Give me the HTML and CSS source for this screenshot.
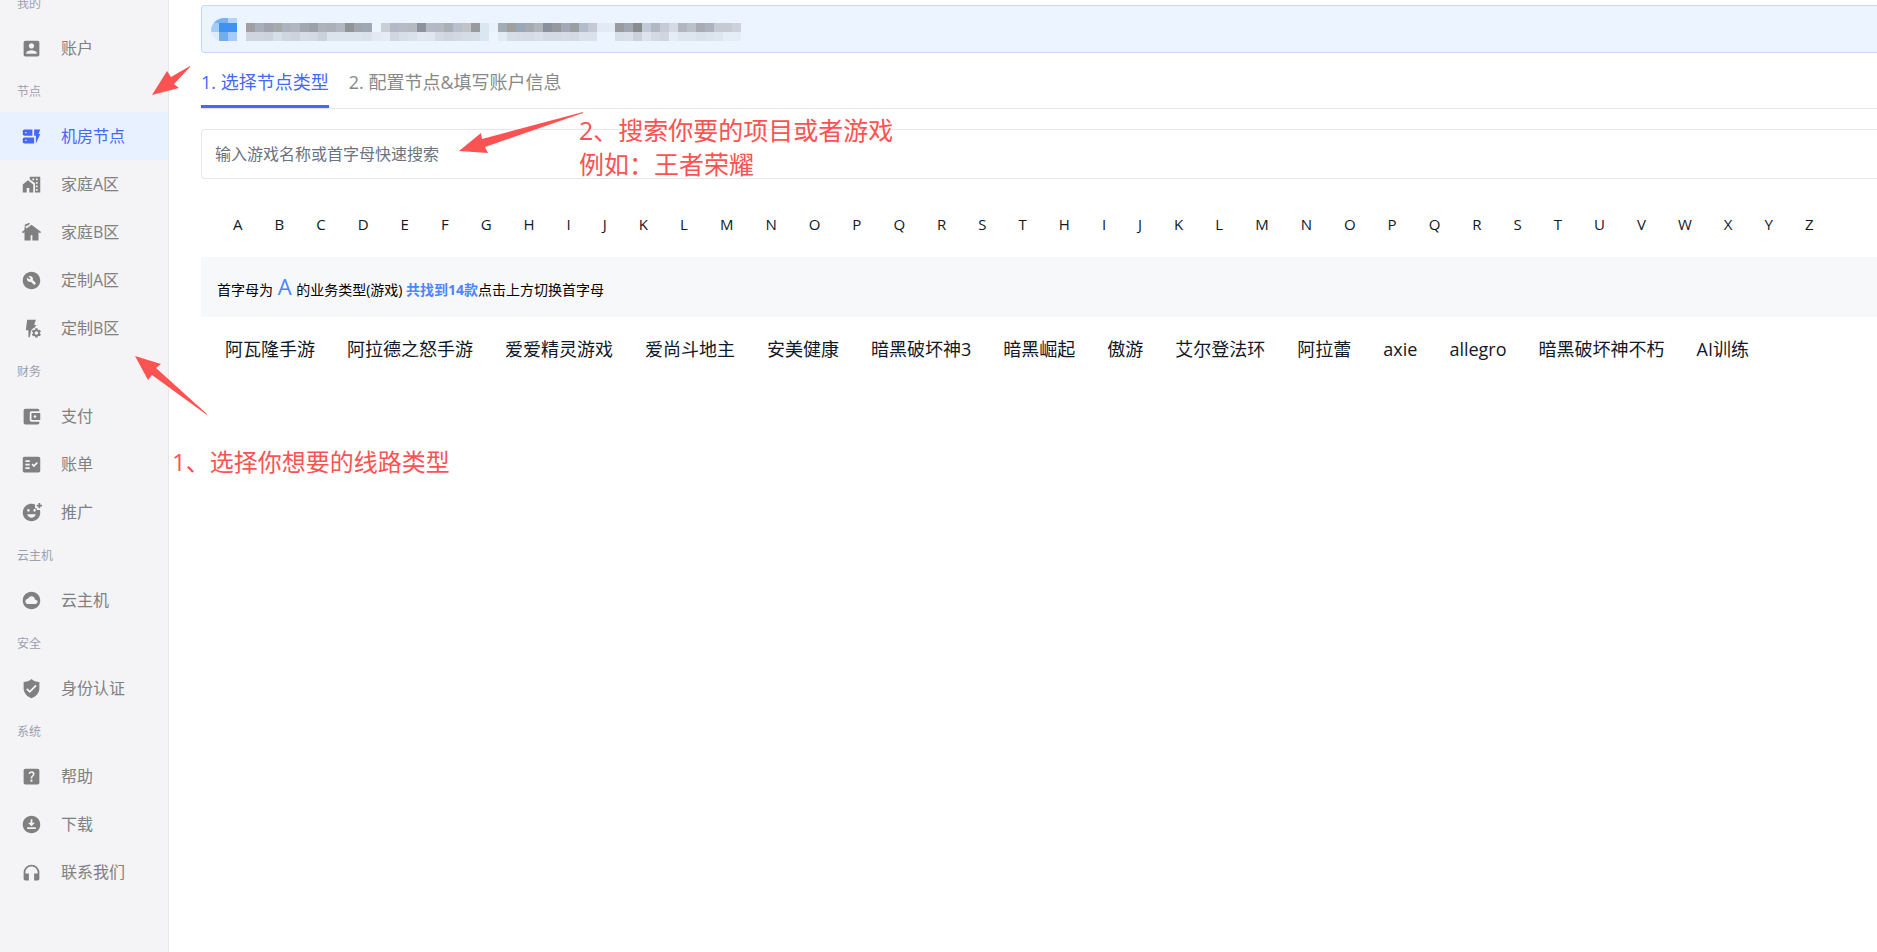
FILE: index.html
```
<!DOCTYPE html>
<html lang="zh-CN">

<head>
    <meta charset="UTF-8">
    <meta name="viewport" content="width=device-width, initial-scale=1.0">
    <title>机房节点</title>
    <link rel="stylesheet" href="styles.css">
</head>

<body>
    <div class="layout">
        <nav class="sidebar">
            <div class="menu">
                <h2 class="group">我的</h2>
                <a class="item" href="#">
                    <svg class="icon" viewBox="0 0 24 24"><path d="M3 5v14c0 1.1.89 2 2 2h14c1.1 0 2-.9 2-2V5c0-1.1-.9-2-2-2H5c-1.11 0-2 .9-2 2zm12 4c0 1.66-1.34 3-3 3s-3-1.34-3-3 1.34-3 3-3 3 1.34 3 3zm-9 8c0-2 4-3.1 6-3.1s6 1.1 6 3.1v1H6v-1z"/></svg>
                    账户
                </a>
                <h2 class="group">节点</h2>
                <a class="item active" href="#">
                    <svg class="icon" viewBox="0 0 24 24"><path d="M17 20v-9h-2V4h7l-2 5h2l-5 11zm-2-7v7H4c-1.1 0-2-.9-2-2v-3c0-1.1.9-2 2-2h11zm-8.75 2.75h-1.5v1.5h1.5v-1.5zM13 4v7H4c-1.1 0-2-.9-2-2V6c0-1.1.9-2 2-2h9zM6.25 6.75h-1.5v1.5h1.5v-1.5z"/></svg>
                    机房节点
                </a>
                <a class="item" href="#">
                    <svg class="icon" viewBox="0 0 24 24" fill-rule="evenodd"><path d="M2 12v9h4.500v-5h3v5H14v-9L8 7z"/><path d="M10 3v3l6 4.500V21h6V3H10zm3 2h2v2h-2zm4 0h2v2h-2zm0 4h2v2h-2zm0 4h2v2h-2zm0 4h2v2h-2z"/></svg>
                    家庭A区
                </a>
                <a class="item" href="#">
                    <svg class="icon" viewBox="0 0 24 24"><path d="M12 3 6 7.580V6H4v3.110L1 11.400l1.210 1.590L4 11.620V21h7v-6h2v6h7v-9.380l1.790 1.360L23 11.400 12 3zM10 1c0 1.660-1.340 3-3 3-.55 0-1 .45-1 1H4c0-1.660 1.340-3 3-3 .55 0 1-.45 1-1h2z"/></svg>
                    家庭B区
                </a>
                <a class="item" href="#">
                    <svg class="icon" viewBox="0 0 24 24"><path d="M12 2C6.480 2 2 6.480 2 12s4.480 10 10 10 10-4.480 10-10S17.520 2 12 2zm4.900 13.490-1.400 1.400c-.2.2-.51.2-.71 0l-3.410-3.410c-1.220.43-2.640.17-3.620-.81-1.110-1.110-1.300-2.790-.59-4.100l2.350 2.350 1.410-1.410-2.350-2.340c1.320-.71 2.990-.52 4.100.59.98.98 1.240 2.400.81 3.620l3.410 3.410c.19.19.19.51 0 .7z"/></svg>
                    定制A区
                </a>
                <a class="item" href="#">
                    <svg class="icon" viewBox="0 0 24 24"><path d="M7 2h10l-2 6h2.500l-2 3a6.500 6.500 0 0 0-4.500 6l-1 5H8.500v-8H5.500z"/><path transform="translate(11 10.500) scale(.55)" d="M19.140 12.940c.04-.3.06-.61.06-.94 0-.32-.02-.64-.07-.94l2.030-1.580c.18-.14.23-.41.12-.61l-1.920-3.320c-.12-.22-.37-.29-.59-.22l-2.390.96c-.5-.38-1.030-.7-1.620-.94l-.36-2.540c-.04-.24-.24-.41-.48-.41h-3.840c-.24 0-.43.17-.47.41l-.36 2.540c-.59.24-1.130.57-1.620.94l-2.390-.96c-.22-.08-.47 0-.59.22L2.740 8.870c-.12.21-.08.47.12.61l2.030 1.580c-.05.3-.09.63-.09.94s.02.64.07.94l-2.030 1.580c-.18.14-.23.41-.12.61l1.920 3.320c.12.22.37.29.59.22l2.390-.96c.5.38 1.030.7 1.620.94l.36 2.540c.05.24.24.41.48.41h3.840c.24 0 .44-.17.47-.41l.36-2.540c.59-.24 1.130-.56 1.620-.94l2.390.96c.22.08.47 0 .59-.22l1.920-3.320c.12-.22.07-.47-.12-.61l-2.010-1.580zM12 15.600c-1.980 0-3.600-1.620-3.600-3.600s1.620-3.600 3.600-3.600 3.600 1.620 3.600 3.600-1.620 3.600-3.600 3.600z"/></svg>
                    定制B区
                </a>
                <h2 class="group">财务</h2>
                <a class="item" href="#">
                    <svg class="icon" viewBox="0 0 24 24"><path d="M21 18v1c0 1.100-.9 2-2 2H5c-1.110 0-2-.9-2-2V5c0-1.100.89-2 2-2h14c1.100 0 2 .9 2 2v1h-9c-1.110 0-2 .9-2 2v8c0 1.100.89 2 2 2h9zm-9-2h10V8H12v8zm4-2.500c-.83 0-1.500-.67-1.500-1.500s.67-1.500 1.500-1.500 1.500.67 1.500 1.500-.67 1.500-1.500 1.500z"/></svg>
                    支付
                </a>
                <a class="item" href="#">
                    <svg class="icon" viewBox="0 0 24 24"><path d="M20 3H4c-1.100 0-2 .9-2 2v14c0 1.100.9 2 2 2h16c1.100 0 2-.9 2-2V5c0-1.100-.9-2-2-2zM10 17H5v-2h5v2zm0-4H5v-2h5v2zm0-4H5V7h5v2zm4.820 6L12 12.160l1.410-1.410 1.410 1.420L17.990 9l1.420 1.420L14.820 15z"/></svg>
                    账单
                </a>
                <a class="item" href="#">
                    <svg class="icon" viewBox="0 0 24 24"><path d="M18 9V7h-2V2.840C14.770 2.300 13.420 2 11.990 2 6.470 2 2 6.480 2 12s4.470 10 9.990 10C17.520 22 22 17.520 22 12c0-1.050-.17-2.050-.47-3H18zm-2.500-1c.83 0 1.500.67 1.500 1.500s-.67 1.500-1.500 1.500-1.500-.67-1.500-1.500.67-1.500 1.500-1.500zm-7 0c.83 0 1.500.67 1.500 1.500S9.330 11 8.500 11 7 10.330 7 9.500 7.670 8 8.500 8zM12 18c-2.280 0-4.220-1.660-5-4h10c-.78 2.340-2.720 4-5 4zM22 3h2v2h-2v2h-2V5h-2V3h2V1h2v2z"/></svg>
                    推广
                </a>
                <h2 class="group">云主机</h2>
                <a class="item" href="#">
                    <svg class="icon" viewBox="0 0 24 24"><path d="M12 2C6.480 2 2 6.480 2 12s4.480 10 10 10 10-4.480 10-10S17.520 2 12 2zm4.500 14H8c-1.660 0-3-1.340-3-3s1.340-3 3-3l.14.01C8.580 8.280 10.130 7 12 7c2.210 0 4 1.790 4 4h.5c1.380 0 2.500 1.120 2.500 2.500S17.880 16 16.500 16z"/></svg>
                    云主机
                </a>
                <h2 class="group">安全</h2>
                <a class="item" href="#">
                    <svg class="icon" viewBox="0 0 24 24"><path d="M12 1C10 3 6 4.500 3 4.500V12c0 5 4 9.500 9 11 5-1.500 9-6 9-11V4.500C18 4.500 14 3 12 1zm-2 16-4-4 1.410-1.410L10 14.170l6.590-6.590L18 9l-8 8z"/></svg>
                    身份认证
                </a>
                <h2 class="group">系统</h2>
                <a class="item" href="#">
                    <svg class="icon" viewBox="0 0 24 24"><path d="M19 3H5c-1.100 0-2 .9-2 2v14c0 1.100.9 2 2 2h14c1.100 0 2-.9 2-2V5c0-1.100-.9-2-2-2zm-7.010 15c-.7 0-1.260-.56-1.260-1.260 0-.71.56-1.250 1.260-1.250.71 0 1.250.54 1.250 1.250-.01.69-.54 1.260-1.250 1.260zm3.010-7.400c-.76 1.110-1.480 1.460-1.870 2.170-.16.29-.22.48-.22 1.410h-1.820c0-.49-.08-1.290.31-1.980.49-.87 1.420-1.390 1.960-2.160.57-.81.25-2.330-1.370-2.330-1.060 0-1.580.8-1.800 1.480l-1.650-.7C9.010 7.150 10.220 6 11.990 6c1.480 0 2.490.67 3.010 1.520.44.72.7 2.070 0 3.080z"/></svg>
                    帮助
                </a>
                <a class="item" href="#">
                    <svg class="icon" viewBox="0 0 24 24"><path d="M12 2C6.480 2 2 6.480 2 12s4.480 10 10 10 10-4.480 10-10S17.520 2 12 2zm-1 4h2v4h3l-4 4-4-4h3V6zm6 11H7v-2h10v2z"/></svg>
                    下载
                </a>
                <a class="item" href="#">
                    <svg class="icon" viewBox="0 0 24 24"><path d="M12 3a9 9 0 0 0-9 9v7c0 1.100.9 2 2 2h4v-8H5v-1c0-3.870 3.130-7 7-7s7 3.130 7 7v1h-4v8h4c1.100 0 2-.9 2-2v-7a9 9 0 0 0-9-9z"/></svg>
                    联系我们
                </a>
            </div>
        </nav>

        <main class="main">
            <div class="notice">
                <svg class="mosaic" width="531" height="23" viewBox="0 0 531 23">
                    <clipPath id="logo"><path d="M13 0h13v23H9A11 11 0 0 1 0 13 13 13 0 0 1 13 0z"/></clipPath>
                    <g clip-path="url(#logo)" shape-rendering="crispEdges">
                        <rect width="17" height="5" fill="#78b2f5"/>
                        <rect x="17" width="9" height="5" fill="#b3d5fb"/>
                        <rect y="5" width="8" height="9" fill="#a4cbf9"/>
                        <rect x="8" y="5" width="18" height="9" fill="#3f92f4"/>
                        <rect y="14" width="8" height="9" fill="#dfebfb"/>
                        <rect x="8" y="14" width="9" height="9" fill="#74acf3"/>
                        <rect x="17" y="14" width="9" height="9" fill="#a5ccf9"/>
                    </g>
                    <g id="cells" shape-rendering="crispEdges"></g>
                </svg>
            </div>

            <div class="tabs">
                <button class="tab active">1. 选择节点类型</button>
                <button class="tab">2. 配置节点&amp;填写账户信息</button>
            </div>

            <input class="search" type="text" aria-label="搜索游戏" placeholder="输入游戏名称或首字母快速搜索">

            <div class="letters"></div>

            <p class="summary">首字母为 <span class="letter">A</span> 的业务类型(游戏) <b>共找到14款</b>点击上方切换首字母</p>

            <div class="games">
                <a href="#">阿瓦隆手游</a>
                <a href="#">阿拉德之怒手游</a>
                <a href="#">爱爱精灵游戏</a>
                <a href="#">爱尚斗地主</a>
                <a href="#">安美健康</a>
                <a href="#">暗黑破坏神3</a>
                <a href="#">暗黑崛起</a>
                <a href="#">傲游</a>
                <a href="#">艾尔登法环</a>
                <a href="#">阿拉蕾</a>
                <a href="#">axie</a>
                <a href="#">allegro</a>
                <a href="#">暗黑破坏神不朽</a>
                <a href="#">AI训练</a>
            </div>
        </main>

        <!-- 操作提示 -->
        <svg class="arrow arrow-node" width="40" height="30" viewBox="0 0 40 30"><path d="M1 29 16 5l4 6L39 0v1L23 18l5 4z"/></svg>
        <svg class="arrow arrow-line" width="74" height="60" viewBox="0 0 74 60"><path d="M1 1l26 8-5 4 51 46v1L18 20l-4 5z"/></svg>
        <svg class="arrow arrow-search" width="126" height="42" viewBox="0 0 126 42"><path d="M1 39l22-18 1 6L125 0v1L27 35l3 6z"/></svg>
        <p class="tip tip-line">1、选择你想要的线路类型</p>
        <p class="tip tip-search">2、搜索你要的项目或者游戏<br>例如：王者荣耀</p>
    </div>
    <script>
        // 字母
        let letters = document.querySelector('.letters')
        for (let s of 'ABCDEFGHIJKLMNOPQRSTHIJKLMNOPQRSTUVWXYZ') {
            let btn = document.createElement('button')
            btn.textContent = s
            letters.appendChild(btn)
        }

        // 公告马赛克，- 为空
        let rows = [
            'a09fa3 a8aebb 9fa4ae a6a9ad adb4bf b1b7c1 a3a7ae 9ba3aa adb3bd acb1b9 b3b7bf 8f9497 9fa6ad 9fa9b5 - c9cfd4 b2bac7 b6bbc5 b5b9c0 8c929e b4bac5 b3b8c1 aab0b8 b9bfcd c1c3c7 979a9f dae6f2 e9f2fc a3abb5 9f9f9b 9aa7b8 a6a9ae b0b4bb 8b919c 95989f a3a9b5 999fa2 b3bdc9 c5c9d5 e2eaf3 e2eaf3 999c9e a0a7b0 888c90 c1cbd8 b0b8c5 c4cad6 d3dae4 b2b6bf bac1ca a7abb4 abb2c0 c5cad4 c5cad4 ccd1dc',
            'ced5de ced5de ccd3dc d6dee8 cfd6e0 cdd3dc d6dde7 d3dae3 cad1da dbe3ed dbe3ed dbe3ed dbe3ed d9e1eb e2e9f3 e4edf6 d0d7e1 d6dee8 dae1ea e0e7f1 dfe6f0 d3dae3 cfd6df d3d9e3 d5dce5 d5dde6 dae6f2 - e2eaf4 d5dde6 d5dce6 d3dbe5 d8dfe9 d3dae3 d3dae3 d5dce6 d3dae4 dae1eb dae1eb - - d6dee8 d9e0ea cad1da dce4ed d3dae3 cfd6df e4edf6 dde5ef dde5ef dae1eb dbe3ed dde5ef e5edf6 e5edf6'
        ]
        let html = ''
        rows.forEach((row, y) => {
            row.split(' ').forEach((color, x) => {
                if (color === '-') return
                html += `<rect x="${35 + x * 9}" y="${5 + y * 9}" width="9" height="9" fill="#${color}"/>`
            })
        })
        document.querySelector('#cells').innerHTML = html
    </script>
</body>

</html>
```
FILE: styles.css
```
* {
    margin: 0;
    padding: 0;
    box-sizing: border-box;
}

body {
    font-family: "Open Sans", "Noto Sans CJK SC", sans-serif;
    color: #111827;
    background: #fff;
    overflow: hidden;
}

a {
    color: inherit;
    text-decoration: none;
}

button {
    border: none;
    background: none;
    font-family: inherit;
    color: inherit;
    cursor: pointer;
}

.layout {
    display: flex;
    height: 100vh;
    position: relative;
    overflow: hidden;
}

/* 侧边栏 */
.sidebar {
    width: 169px;
    flex-shrink: 0;
    overflow: hidden;
    background: #f4f4f7;
    border-right: 1px solid #e5e5ea;
}

.menu {
    margin-top: -16px;
}

.group {
    height: 40px;
    padding-left: 17px;
    font-size: 12px;
    font-weight: 400;
    line-height: 40px;
    color: #9aa0ae;
}

.item {
    display: flex;
    align-items: center;
    gap: 19px;
    height: 48px;
    padding-left: 21px;
    font-size: 16px;
    line-height: 24px;
    color: #808080;
}

.item.active {
    color: #4468f8;
    background: #e8f1ff;
}

.icon {
    width: 21px;
    height: 21px;
    fill: currentColor;
}

/* 内容 */
.main {
    flex: 1;
    min-width: 0;
    padding: 5px 0 0 32px;
}

.notice {
    display: flex;
    height: 48px;
    padding: 12px 9px;
    background: #ecf5ff;
    border: 1px solid #c3dcfb;
    border-right: none;
    border-radius: 4px 0 0 4px;
}

.tabs {
    display: flex;
    gap: 20px;
    padding-top: 4px;
    border-bottom: 1px solid #e5e7eb;
}

.tab {
    height: 51px;
    font-size: 18px;
    line-height: 48px;
    padding-top: 1px;
    color: #888;
    border-bottom: 3px solid transparent;
}

.tab.active {
    color: #4468f8;
    border-color: #4468f8;
}

.search {
    display: block;
    width: 100%;
    height: 50px;
    margin-top: 20px;
    padding: 0 13px;
    font-family: inherit;
    font-size: 16px;
    border: 1px solid #e5e7eb;
    border-right: none;
    border-radius: 4px 0 0 4px;
    outline: none;
}

.search::placeholder {
    color: #6b7280;
}

.letters {
    display: flex;
    gap: 32px;
    margin-top: 14px;
    padding: 0 32px 2px;
}

.letters button {
    height: 62px;
    font-size: 15px;
    line-height: 62px;
}

.summary {
    height: 60px;
    padding: 0 16px;
    font-size: 14px;
    line-height: 58px;
    color: #000;
    background: #f7f8fa;
}

.summary .letter {
    margin: 0 1px;
    font-size: 22px;
    color: #4a86ff;
}

.summary b {
    color: #4a86ff;
}

.games {
    display: flex;
    flex-wrap: wrap;
    gap: 0 32px;
    padding: 16px 24px;
    font-size: 18px;
    line-height: 32px;
}

/* 提示箭头和文字 */
.arrow,
.tip {
    position: absolute;
    color: #fd5252;
    fill: #fd5252;
    pointer-events: none;
}

.arrow-node {
    left: 151px;
    top: 66px;
}

.arrow-line {
    left: 134px;
    top: 355px;
}

.arrow-search {
    left: 458px;
    top: 112px;
}

.tip {
    font-size: 24px;
    line-height: 34px;
    white-space: nowrap;
}

.tip-line {
    left: 172px;
    top: 445px;
}

.tip-search {
    left: 579px;
    top: 113px;
    font-size: 25px;
}
```
